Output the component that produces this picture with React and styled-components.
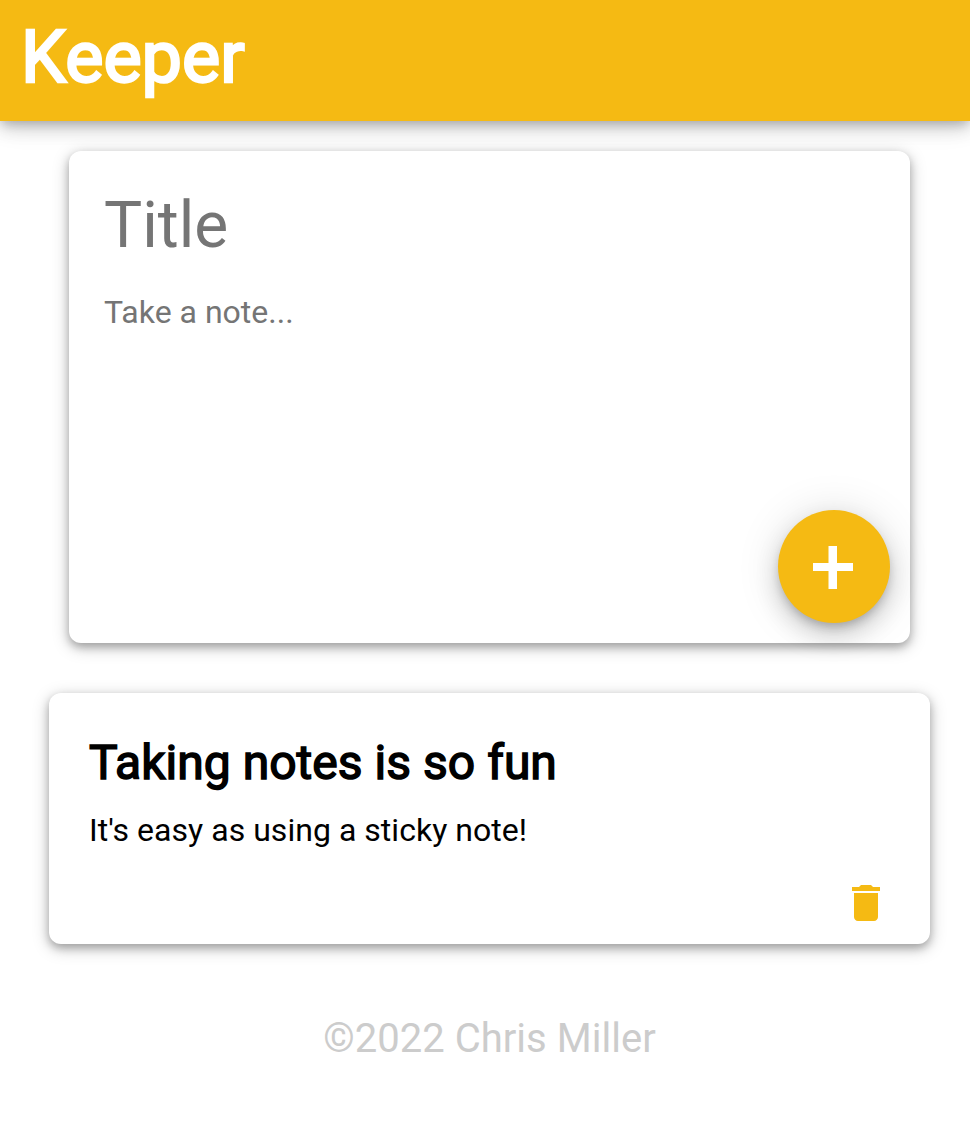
import React from "react";
import styled, { createGlobalStyle } from "styled-components";

const Global = createGlobalStyle`
  * { box-sizing: border-box; }
  html, body { margin: 0; background: #fff; }
  body { font-family: Roboto, "Liberation Sans", sans-serif; overflow: hidden; }
  h1, h2, p { margin: 0; }
`;

const Page = styled.div`
  height: 1130px;
  display: flex;
  flex-direction: column;
`;

const Header = styled.header`
  height: 121px;
  padding: 0 21px;
  background: #f5ba13;
  box-shadow: 0 4px 10px -2px rgba(0, 0, 0, 0.2), 0 8px 16px rgba(0, 0, 0, 0.14), 0 2px 28px rgba(0, 0, 0, 0.12);
`;

const Brand = styled.h1`
  color: #fff;
  font-size: 72px;
  line-height: 115px;
  font-weight: 400;
  -webkit-text-stroke: 2.5px #fff;
`;

const Card = styled.section`
  background: #fff;
  border-radius: 12px;
  box-shadow: 0 4px 8px rgba(0, 0, 0, 0.25), 0 4px 17px rgba(0, 0, 0, 0.22);
`;

const Composer = styled(Card)`
  position: relative;
  width: 841px;
  height: 492px;
  margin: 30px 0 0 69px;
  padding: 37px 35px;
`;

const Field = styled.input`
  display: block;
  width: 100%;
  border: 0;
  padding: 0;
  outline: none;
  background: transparent;
  font-family: inherit;
  font-size: 64px;
  height: 75px;
  &::placeholder { color: #757575; }
`;

const TextField = styled.textarea`
  display: block;
  width: 100%;
  height: 160px;
  margin-top: 30px;
  border: 0;
  padding: 0;
  outline: none;
  resize: none;
  background: transparent;
  font-family: inherit;
  font-size: 32px;
  line-height: 38px;
  &::placeholder { color: #757575; }
`;

const AddButton = styled.button`
  position: absolute;
  right: 20px;
  bottom: 20px;
  width: 112px;
  height: 113px;
  display: grid;
  place-items: center;
  border: 0;
  padding: 0;
  border-radius: 50%;
  background: #f5ba13;
  box-shadow: 0 6px 10px -2px rgba(0, 0, 0, 0.2), 0 12px 24px rgba(0, 0, 0, 0.16), 0 2px 44px rgba(0, 0, 0, 0.13);
`;

const Note = styled(Card)`
  width: 881px;
  height: 251px;
  margin: 50px 0 0 49px;
  padding: 41px 40px;
  display: flex;
  flex-direction: column;
`;

const NoteTitle = styled.h2`
  font-size: 48px;
  line-height: 58px;
  font-weight: 400;
  letter-spacing: 0.03px;
  -webkit-text-stroke: 1.5px #000;
`;

const NoteText = styled.p`
  margin-top: 19px;
  font-size: 32px;
  line-height: 38px;
  letter-spacing: 0.03px;
`;

const DeleteButton = styled.button`
  align-self: flex-end;
  margin: 30px 0 0;
  border: 0;
  padding: 0;
  background: none;
  display: flex;
`;

const Footer = styled.footer`
  margin-top: 71px;
  padding-left: 9px;
  text-align: center;
  font-size: 40px;
  line-height: 48px;
  letter-spacing: 0.03px;
  color: #ccc;
`;

export default function App() {
  return (
    <Page>
      <Global />
      <Header><Brand>Keeper</Brand></Header>
      <Composer>
        <Field placeholder="Title" />
        <TextField placeholder="Take a note..." />
        <AddButton aria-label="Add">
          <svg width="112" height="113" viewBox="0 0 112 113" fill="#fff">
            <path d="M50.5 36h8.5v17h16v8H59v18h-8.5V61H35v-8h15.5z" />
          </svg>
        </AddButton>
      </Composer>
      <Note>
        <NoteTitle>Taking notes is so fun</NoteTitle>
        <NoteText>It's easy as using a sticky note!</NoteText>
        <DeleteButton aria-label="Delete">
          <svg width="48" height="48" viewBox="0 0 24 24" fill="#f5ba13">
            <path d="M6 19c0 1.1.9 2 2 2h8c1.1 0 2-.9 2-2V7H6v12zM19 4h-3.5l-1-1h-5l-1 1H5v2h14V4z" />
          </svg>
        </DeleteButton>
      </Note>
      <Footer>©2022 Chris Miller</Footer>
    </Page>
  );
}
